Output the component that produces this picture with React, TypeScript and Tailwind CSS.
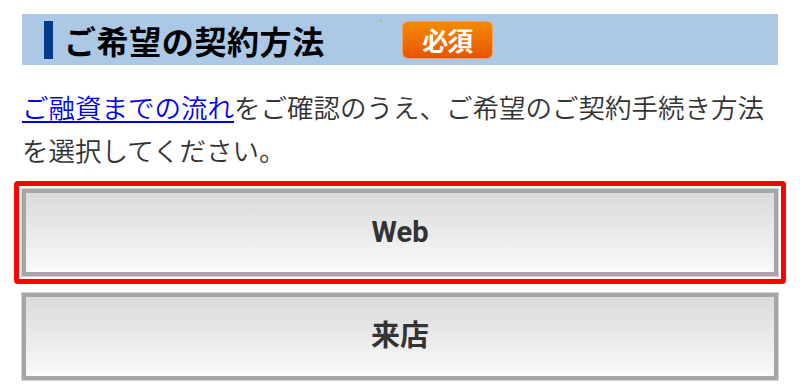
import React from "react";

const jp = { fontFamily: '"Noto Sans CJK JP", "Noto Sans", sans-serif' };

function Btn({ label }: { label: string }) {
  return (
    <div className="h-[87px] border-[4px] border-[#a6a6a6] shadow-[0_0_0_1px_#d4d4d4] bg-gradient-to-b from-[#dadada] to-[#fafafa] flex items-center justify-center">
      <span
        className="text-[29px] font-bold text-[#333333] leading-none"
        style={{ fontFamily: 'Roboto, "Noto Sans CJK JP", sans-serif' }}
      >
        {label}
      </span>
    </div>
  );
}

export default function App() {
  return (
    <div className="w-[800px] h-[390px] bg-white overflow-hidden" style={jp}>
      <div className="px-[22px] pt-[14px]">
        <div className="relative h-[51px] bg-[#abc8e6] flex items-center">
          <div className="ml-[22px] w-[9px] h-[38px] bg-[#003c87]" />
          <h2 className="ml-[11px] text-[32px] font-bold text-black leading-none tracking-[0.6px]">
            ご希望の契約方法
          </h2>
          <span className="absolute left-[358px] top-[6px] w-[2px] h-[2px] bg-[#9bd12a]" />
          <div className="ml-[78px] w-[89px] h-[36px] rounded-[5px] bg-gradient-to-b from-[#f28a00] to-[#e95300] flex items-center justify-center shadow-[0_0_0_1px_#f0a060]">
            <span className="text-white font-bold text-[26px] leading-none tracking-[-1px]">必須</span>
          </div>
        </div>
        <p className="mt-[20px] text-[26.5px] leading-[43px] font-[350] text-[#333333]">
          <a href="#" className="text-[#0000ee] underline underline-offset-[3px]">
            ご融資までの流れ
          </a>
          をご確認のうえ、ご希望のご契約手続き方法を選択してください。
        </p>
        <div className="mt-[10px] -mx-[8px] border-[5px] border-[#ff0000] rounded-[4px] p-[3px]">
          <Btn label="Web" />
        </div>
        <div className="mt-[9px]">
          <Btn label="来店" />
        </div>
      </div>
    </div>
  );
}
